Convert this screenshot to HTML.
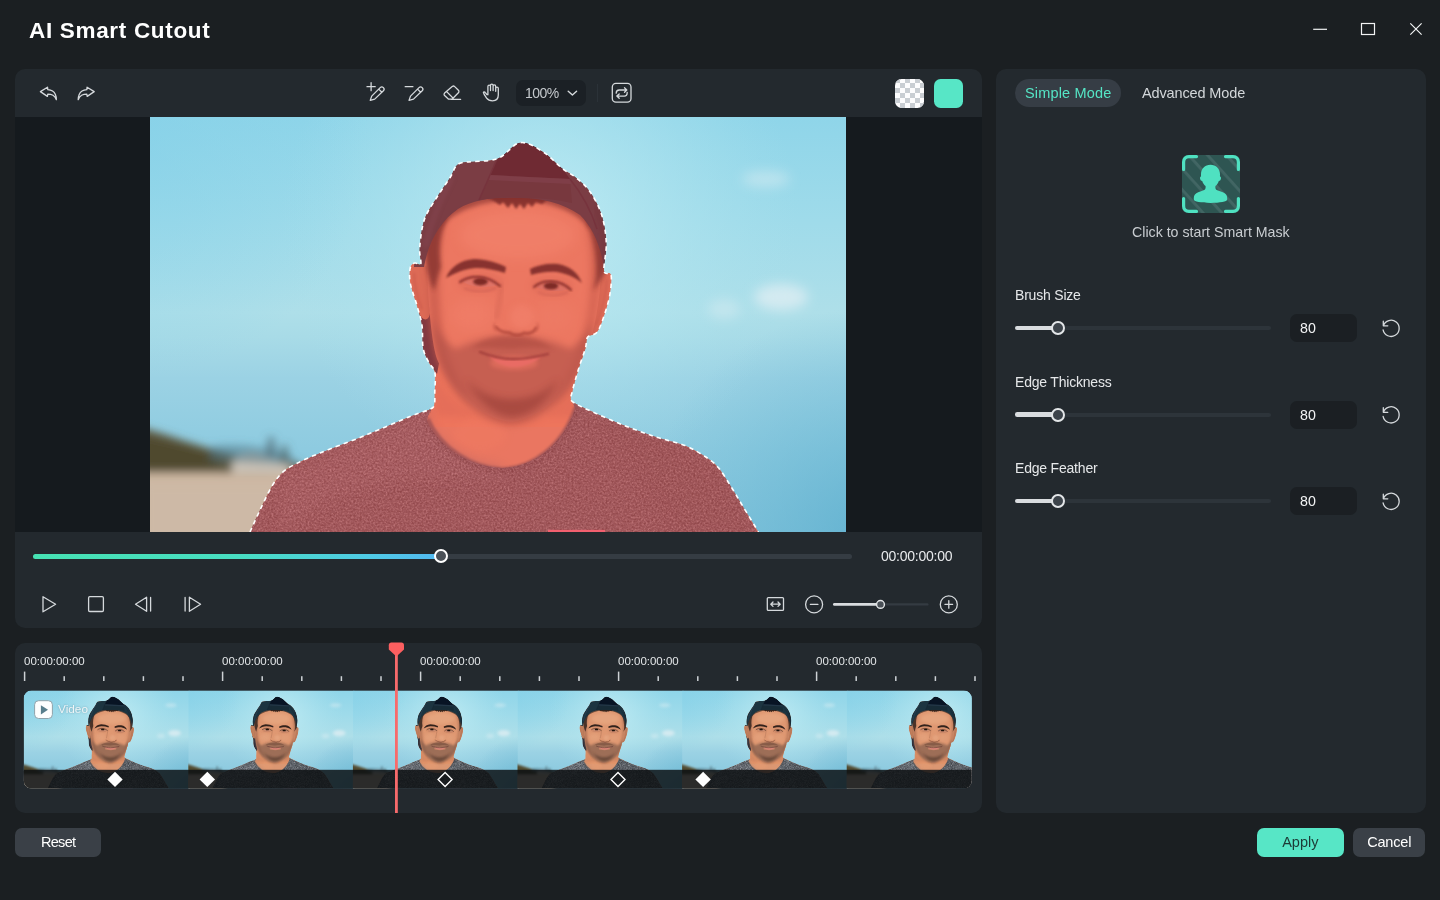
<!DOCTYPE html>
<html>
<head>
<meta charset="utf-8">
<title>AI Smart Cutout</title>
<style>
*{box-sizing:border-box;margin:0;padding:0}
html,body{width:1440px;height:900px;overflow:hidden}
body{background:#1b1f22;font-family:"Liberation Sans",sans-serif;color:#e8eaec;position:relative}
.abs{position:absolute}
.panel{position:absolute;background:#23292e;border-radius:10px}
.t{position:absolute;white-space:nowrap;line-height:1}
.t,.rl,.btn{will-change:transform}
#title{left:28.5px;top:19.5px;font-size:22.5px;font-weight:bold;color:#fff;letter-spacing:0.68px}
svg{position:absolute;overflow:visible}
.ico{fill:none;stroke:#d5d9dc;stroke-width:1.3;stroke-linecap:round;stroke-linejoin:round}
.btn{position:absolute;border-radius:7px;background:#3a4047;color:#fff;font-size:14.5px;text-align:center;height:29px;line-height:29px}
.lbl{font-size:14px;color:#e6e8ea;letter-spacing:-0.2px}
.track{position:absolute;height:4px;border-radius:2px;background:#2c3339}
.fill{position:absolute;height:4px;border-radius:2px;background:#d7dbde}
.knob{position:absolute;width:13px;height:13px;border-radius:50%;background:#3a4047;border:2px solid #e3e6e8}
.vbox{position:absolute;width:67px;height:29px;border-radius:6px;background:#1a1e22;color:#fff;font-size:14px;line-height:29px;padding-left:10px}
.rl{position:absolute;font-size:11.5px;color:#e3e6e8;white-space:nowrap;line-height:1}
</style>
</head>
<body>
<!--PHOTODEFS-->
<svg width="0" height="0" style="position:absolute;left:0;top:0">
<defs>
  <linearGradient id="sky" x1="0" y1="0" x2="0" y2="1">
    <stop offset="0" stop-color="#8fd5e9"/>
    <stop offset="0.25" stop-color="#9fdbea"/>
    <stop offset="0.47" stop-color="#aedfe9"/>
    <stop offset="0.53" stop-color="#a8dbe7"/>
    <stop offset="0.63" stop-color="#9bd2e4"/>
    <stop offset="0.8" stop-color="#8ecbe0"/>
    <stop offset="1" stop-color="#82c3db"/>
  </linearGradient>
  <radialGradient id="skyglow" cx="390" cy="110" r="260" gradientUnits="userSpaceOnUse">
    <stop offset="0" stop-color="#c2edf4" stop-opacity="0.9"/>
    <stop offset="0.5" stop-color="#b4e6f0" stop-opacity="0.5"/>
    <stop offset="1" stop-color="#a8e0ec" stop-opacity="0"/>
  </radialGradient>
  <radialGradient id="skydeep" cx="720" cy="420" r="230" gradientUnits="userSpaceOnUse">
    <stop offset="0" stop-color="#5fb0cf" stop-opacity="0.85"/>
    <stop offset="1" stop-color="#6fbcd6" stop-opacity="0"/>
  </radialGradient>
  <radialGradient id="skyleft" cx="-20" cy="20" r="240" gradientUnits="userSpaceOnUse">
    <stop offset="0" stop-color="#84d0e8" stop-opacity="0.6"/>
    <stop offset="1" stop-color="#84d0e8" stop-opacity="0"/>
  </radialGradient>
  <linearGradient id="skin" x1="0" y1="0" x2="1" y2="0">
    <stop offset="0" stop-color="#d59a78"/>
    <stop offset="0.35" stop-color="#e2a883"/>
    <stop offset="0.7" stop-color="#dda07c"/>
    <stop offset="1" stop-color="#c98e70"/>
  </linearGradient>
  <filter id="b1" x="-20%" y="-20%" width="140%" height="140%"><feGaussianBlur stdDeviation="1"/></filter>
  <filter id="b2" x="-20%" y="-20%" width="140%" height="140%"><feGaussianBlur stdDeviation="2"/></filter>
  <filter id="b3" x="-30%" y="-30%" width="160%" height="160%"><feGaussianBlur stdDeviation="3.5"/></filter>
  <filter id="b5" x="-30%" y="-30%" width="160%" height="160%"><feGaussianBlur stdDeviation="4.5"/></filter>
  <filter id="b6" x="-30%" y="-30%" width="160%" height="160%"><feGaussianBlur stdDeviation="6"/></filter>
  <filter id="grain" x="0" y="0" width="100%" height="100%">
    <feTurbulence type="fractalNoise" baseFrequency="0.55" numOctaves="2" seed="7" result="n"/>
    <feColorMatrix in="n" type="matrix" values="0 0 0 0 1  0 0 0 0 1  0 0 0 0 1  2.6 0 0 0 -1.05"/>
    <feComposite in2="SourceGraphic" operator="in"/>
  </filter>
  <filter id="grainD" x="0" y="0" width="100%" height="100%">
    <feTurbulence type="fractalNoise" baseFrequency="0.5" numOctaves="2" seed="21" result="n"/>
    <feColorMatrix in="n" type="matrix" values="0 0 0 0 0  0 0 0 0 0  0 0 0 0 0  0 2.6 0 0 -1.05"/>
    <feComposite in2="SourceGraphic" operator="in"/>
  </filter>
  <path id="person" d="M100.0 415.0C101.6 411.6 105.8 401.8 109.4 394.3C113.0 386.8 117.7 376.5 121.5 370.0C125.3 363.5 128.4 359.2 132.5 355.4C136.6 351.5 139.5 350.1 145.8 346.9C152.1 343.6 158.8 340.6 170.2 335.9C181.5 331.2 198.9 325.0 213.9 318.9C228.9 312.8 248.4 304.4 260.0 299.5C271.6 294.6 281 293.5 283.6 289.7C285.6 286 284.5 279.5 284.8 273.7C285.1 267.9 285.8 259.7 284.8 255.0C283.8 250.3 280.9 249.6 279.0 245.7C277.1 241.8 274.4 237.9 273.2 231.7C272.0 225.5 273.0 215.3 272.0 208.3C271.0 201.3 269.2 196.7 267.3 189.7C265.4 182.7 261.5 172.8 260.3 166.3C259.1 159.8 259.5 153.9 260.3 150.5C261.1 147.1 263.2 146.6 265.0 146.0C266.8 145.4 270.0 149.6 270.8 147.0C271.6 144.4 269.1 138.1 269.7 130.7C270.3 123.3 271.6 110.9 274.3 102.7C277.0 94.5 281.7 88.7 286.0 81.7C290.3 74.7 296.1 66.6 300.0 60.7C303.9 54.8 303.5 49.6 309.3 46.5C317.1 43.4 336.6 45.5 346.7 42.0C356.8 38.5 362.2 26.9 370.0 25.7C377.8 24.5 386.3 30.7 393.3 35.0C400.3 39.3 406.6 47.0 412.0 51.3C417.4 55.6 421.3 56.8 426.0 60.7C430.7 64.6 435.7 68.5 440.0 74.7C444.3 80.9 449.0 89.5 451.7 98.0C454.4 106.5 455.9 116.7 456.3 126.0C456.7 135.3 453.2 148.7 454.0 154.0C454.8 159.3 460.0 154.0 461.0 158.0C462.0 162.0 461.0 171.2 459.8 178.0C458.6 184.8 456.1 192.8 454.0 199.0C451.9 205.2 449.7 211.8 447.0 215.3C444.3 218.8 439.6 217.3 437.7 220.0C435.8 222.7 436.9 226.2 435.3 231.7C433.7 237.1 430.4 245.7 428.3 252.7C426.2 259.7 423.6 268.5 422.5 273.7C421.4 278.9 419.4 281 421.5 283.8C424.6 287.2 432.8 290.3 441.3 294.3C449.8 298.3 462.1 303.6 472.5 307.8C482.9 312.0 493.4 315.8 503.8 319.3C514.2 322.8 526.3 325.2 535.0 328.6C543.7 332.1 550.2 336.4 555.8 340.0C561.3 343.6 564.1 345.6 568.3 350.5C572.5 355.4 576.6 362.7 580.8 369.3C585.0 375.9 588.7 382.4 593.3 390.0C597.9 397.6 606.0 410.8 608.5 415.0Z"/>
  <path id="personline" d="M100.0 415.0C101.6 411.6 105.8 401.8 109.4 394.3C113.0 386.8 117.7 376.5 121.5 370.0C125.3 363.5 128.4 359.2 132.5 355.4C136.6 351.5 139.5 350.1 145.8 346.9C152.1 343.6 158.8 340.6 170.2 335.9C181.5 331.2 198.9 325.0 213.9 318.9C228.9 312.8 248.4 304.4 260.0 299.5C271.6 294.6 281 293.5 283.6 289.7C285.6 286 284.5 279.5 284.8 273.7C285.1 267.9 285.8 259.7 284.8 255.0C283.8 250.3 280.9 249.6 279.0 245.7C277.1 241.8 274.4 237.9 273.2 231.7C272.0 225.5 273.0 215.3 272.0 208.3C271.0 201.3 269.2 196.7 267.3 189.7C265.4 182.7 261.5 172.8 260.3 166.3C259.1 159.8 259.5 153.9 260.3 150.5C261.1 147.1 263.2 146.6 265.0 146.0C266.8 145.4 270.0 149.6 270.8 147.0C271.6 144.4 269.1 138.1 269.7 130.7C270.3 123.3 271.6 110.9 274.3 102.7C277.0 94.5 281.7 88.7 286.0 81.7C290.3 74.7 296.1 66.6 300.0 60.7C303.9 54.8 303.5 49.6 309.3 46.5C317.1 43.4 336.6 45.5 346.7 42.0C356.8 38.5 362.2 26.9 370.0 25.7C377.8 24.5 386.3 30.7 393.3 35.0C400.3 39.3 406.6 47.0 412.0 51.3C417.4 55.6 421.3 56.8 426.0 60.7C430.7 64.6 435.7 68.5 440.0 74.7C444.3 80.9 449.0 89.5 451.7 98.0C454.4 106.5 455.9 116.7 456.3 126.0C456.7 135.3 453.2 148.7 454.0 154.0C454.8 159.3 460.0 154.0 461.0 158.0C462.0 162.0 461.0 171.2 459.8 178.0C458.6 184.8 456.1 192.8 454.0 199.0C451.9 205.2 449.7 211.8 447.0 215.3C444.3 218.8 439.6 217.3 437.7 220.0C435.8 222.7 436.9 226.2 435.3 231.7C433.7 237.1 430.4 245.7 428.3 252.7C426.2 259.7 423.6 268.5 422.5 273.7C421.4 278.9 419.4 281 421.5 283.8C424.6 287.2 432.8 290.3 441.3 294.3C449.8 298.3 462.1 303.6 472.5 307.8C482.9 312.0 493.4 315.8 503.8 319.3C514.2 322.8 526.3 325.2 535.0 328.6C543.7 332.1 550.2 336.4 555.8 340.0C561.3 343.6 564.1 345.6 568.3 350.5C572.5 355.4 576.6 362.7 580.8 369.3C585.0 375.9 588.7 382.4 593.3 390.0C597.9 397.6 606.0 410.8 608.5 415.0"/>
  <clipPath id="personclip"><use href="#person"/></clipPath>
  <clipPath id="frame"><rect width="696" height="415"/></clipPath>

  <symbol id="photo" viewBox="0 0 696 415" preserveAspectRatio="none">
    <g clip-path="url(#frame)">
      <!-- sky -->
      <rect width="696" height="415" fill="url(#sky)"/>
      <rect width="696" height="415" fill="url(#skyglow)"/>
      <rect width="696" height="415" fill="url(#skydeep)"/>
      <rect width="696" height="415" fill="url(#skyleft)"/>
      <!-- clouds -->
      <g filter="url(#b6)" fill="#ecf2f6">
        <ellipse cx="616" cy="62" rx="24" ry="8" opacity="0.4"/>
        <ellipse cx="631" cy="180" rx="27" ry="13" opacity="0.62"/>
        <ellipse cx="574" cy="192" rx="16" ry="10" opacity="0.32"/>
      </g>
      <!-- beach -->
      <g filter="url(#b5)">
        <path d="M-10 352L60 352L150 352L160 425L-10 425Z" fill="#cdb8a3"/>
        <path d="M-10 310C20 318 50 330 80 337C100 341 125 343 150 346L150 356C110 357 60 356 -10 356Z" fill="#5e5a42"/>
        <path d="M-10 318C10 322 40 330 70 338L70 352L-10 352Z" fill="#4f492f"/>
        <path d="M82 344C90 336 104 334 112 338C120 342 130 346 140 348L140 356L82 356Z" fill="#cbc3b8"/>
        <path d="M60 330C80 326 110 328 140 338L146 348L60 344Z" fill="#4f7483" opacity="0.55"/>
        <path d="M118 320L124 320L126 340L116 340Z" fill="#4f6770" opacity="0.7"/>
        <path d="M132 328L137 328L139 346L130 346Z" fill="#4c5f60" opacity="0.7"/>
      </g>
      <rect x="-5" y="368" width="150" height="60" fill="#cdb9a6" filter="url(#b3)"/>
      <!-- person -->
      <g clip-path="url(#personclip)">
        <!-- skin base (head+neck) -->
        <use href="#person" fill="#db9772"/>
        <!-- neck -->
        <path d="M280 240L440 236L446 310L272 310Z" fill="#e2946a"/>
        <path d="M284 250C292 280 322 306 362 309C398 306 424 282 432 246C438 270 436 290 430 300L290 300C282 288 282 268 284 250Z" fill="#c47f5e" opacity="0.5" filter="url(#b3)"/>
        <ellipse cx="330" cy="318" rx="26" ry="16" fill="#e59b72" opacity="0.55" filter="url(#b3)"/>
        <!-- shirt -->
        <path d="M95 420L109 394L121.5 370L132.5 355L146 347L170 336L214 319L260 299.5L283.5 289.5C279 296 277.5 300 277 304C290 332 322 350 352 351C384 350 412 328 425 292C424 288 423 286 421.5 284L441 294L472.5 308L504 319L535 328.6L556 340L568 350.5L581 369L593 390L610 420Z" fill="#5d6269"/>
        <!-- shirt soft shading -->
        <path d="M130 360L283 292L277 304C290 332 322 350 352 351L352 365C300 360 200 350 130 420Z" fill="#6d727a" opacity="0.6" filter="url(#b6)"/>
        <path d="M440 296L560 344L610 420L520 420C500 370 470 330 440 296Z" fill="#565b62" opacity="0.5" filter="url(#b6)"/>
        <!-- collar rib -->
        <path d="M277 302C290 332 322 352 352 353C384 352 414 328 426.5 290" fill="none" stroke="#50555c" stroke-width="5.5" opacity="0.75" filter="url(#b1)"/>
        <!-- shirt grain -->
        <path d="M95 420L109 394L121.5 370L132.5 355L146 347L170 336L214 319L260 299.5L283 290L277 304C290 332 322 350 352 351C384 350 412 328 425 292L441 294L472.5 308L504 319L535 328.6L556 340L568 350.5L581 369L593 390L610 420Z" fill="#fff" filter="url(#grain)" opacity="0.28"/>
        <path d="M95 420L109 394L121.5 370L132.5 355L146 347L170 336L214 319L260 299.5L283 290L277 304C290 332 322 350 352 351C384 350 412 328 425 292L441 294L472.5 308L504 319L535 328.6L556 340L568 350.5L581 369L593 390L610 420Z" fill="#000" filter="url(#grainD)" opacity="0.3"/>
        <!-- shirt logo strip -->
        <rect x="398" y="412.9" width="57" height="4" fill="#e8708a"/>

        <!-- back of cap behind ear/neck (left) -->
        <path d="M266 192C269 208 270 222 273 232C275 240 280 247 287 257L291 236C285 222 282 206 280 190Z" fill="#2a2f3c"/>
        <!-- ears -->
        <path d="M271 147C264 143 259 148 260 160C261 172 265 186 269 196C272 204 279 205 280 196L278 150Z" fill="#c4825f"/>
        <path d="M264 156C264 168 268 182 272 192" stroke="#a8694f" stroke-width="2.5" fill="none" opacity="0.6" filter="url(#b1)"/>
        <path d="M453 154C459 152 462 157 461 166C460 180 456 196 450 210C446 218 438 221 436 216L445 160Z" fill="#c58260"/>
        <path d="M457 162C456 178 452 194 446 208" stroke="#a8694f" stroke-width="2.5" fill="none" opacity="0.5" filter="url(#b1)"/>
        <!-- face -->
        <path d="M277 150C275 120 286 96 310 86C340 78 400 78 425 90C445 102 452 130 451 156C450 185 444 215 437 236C427 266 398 298 362 305C330 302 300 274 287 242C281 224 278 180 277 150Z" fill="#df9872"/>
        <!-- highlights -->
        <ellipse cx="368" cy="118" rx="58" ry="24" fill="#e9ab84" opacity="0.65" filter="url(#b6)"/>
        <ellipse cx="322" cy="198" rx="22" ry="16" fill="#e6a580" opacity="0.6" filter="url(#b6)"/>
        <ellipse cx="404" cy="200" rx="20" ry="15" fill="#e3a27d" opacity="0.5" filter="url(#b6)"/>
        <!-- side shading -->
        <path d="M277 150C275 120 282 100 298 90C289 120 287 170 292 212C296 240 306 262 322 284C302 270 291 252 287 242C281 224 278 180 277 150Z" fill="#9a6048" opacity="0.7" filter="url(#b3)"/>
        <path d="M451 150C452 125 446 104 432 94C441 120 443 160 437 200C432 230 420 258 402 284C424 266 432 248 437 236C444 215 450 185 451 150Z" fill="#a2664b" opacity="0.6" filter="url(#b3)"/>
        <!-- beard stubble -->
        <path d="M281 200C284 232 292 258 306 276C322 296 344 307 362 307C384 305 408 290 422 270C434 252 441 230 443 204C438 216 430 226 420 232C408 226 392 221 378 220C372 216 352 216 346 220C332 221 318 226 306 232C296 226 287 214 281 200Z" fill="#7c5948" opacity="0.66" filter="url(#b3)"/>
        <path d="M316 262C328 286 348 300 362 300C380 299 398 286 408 262C396 276 380 282 362 282C344 282 328 276 316 262Z" fill="#5c3f33" opacity="0.75" filter="url(#b3)"/>
        <path d="M322 231C332 222 346 218 360 220C376 218 392 222 404 233C394 230 380 230 362 232C346 231 334 230 322 231Z" fill="#6e4839" opacity="0.5" filter="url(#b2)"/>
        <!-- skin around lips -->
        <ellipse cx="364" cy="246" rx="24" ry="7" fill="#d18a6d" opacity="0.75" filter="url(#b2)"/>
        <!-- lips / mouth -->
        <path d="M338 238C346 247 356 250 364 250C374 250 384 246 392 239C380 242 372 243 363 243C353 243 346 241 338 238Z" fill="#d98478" filter="url(#b1)"/>
        <path d="M330 235C340 239 352 242 363 242C374 242 386 240 398 237" stroke="#5e3630" stroke-width="2.3" fill="none" stroke-linecap="round" filter="url(#b1)"/>
        <!-- nose -->
        <ellipse cx="372" cy="200" rx="12" ry="12" fill="#e8a984" opacity="0.7" filter="url(#b3)"/>
        <path d="M352 166C350 180 349 190 346 202" stroke="#b3775a" stroke-width="4" fill="none" opacity="0.55" filter="url(#b2)"/>
        <path d="M346 210C350 216 356 215 360 216C364 219 370 219 374 216C378 217 384 216 386 211" stroke="#7a4633" stroke-width="3" fill="none" stroke-linecap="round" opacity="0.8" filter="url(#b1)"/>
        <path d="M345 206C343 210 344 213 347 214M387 206C389 210 388 213 385 214" stroke="#a86b50" stroke-width="2" fill="none" opacity="0.6" filter="url(#b1)"/>
        <!-- eyes -->
        <ellipse cx="330" cy="165" rx="22" ry="9" fill="#b9755a" opacity="0.45" filter="url(#b3)"/>
        <ellipse cx="402" cy="169" rx="21" ry="9" fill="#b9755a" opacity="0.45" filter="url(#b3)"/>
        <path d="M313 165C320 160 335 159 348 168C338 171 323 171 313 165Z" fill="#c9917a"/>
        <ellipse cx="330.5" cy="164.6" rx="7.4" ry="3.8" fill="#231510" filter="url(#b1)"/>
        <path d="M310 165C320 158 336 157 350 169" stroke="#3c241c" stroke-width="2.2" fill="none" stroke-linecap="round" filter="url(#b1)"/>
        <path d="M314 171C324 176 338 175 346 171" stroke="#b57860" stroke-width="2" fill="none" opacity="0.7" filter="url(#b1)"/>
        <path d="M386 170C394 164 409 164 419 172C410 175 396 175 386 170Z" fill="#c48c75"/>
        <ellipse cx="401" cy="168.9" rx="7.2" ry="3.6" fill="#231510" filter="url(#b1)"/>
        <path d="M384 170C393 162 410 162 421 173" stroke="#3c241c" stroke-width="2.2" fill="none" stroke-linecap="round" filter="url(#b1)"/>
        <path d="M388 175C397 180 410 179 418 175" stroke="#b57860" stroke-width="2" fill="none" opacity="0.7" filter="url(#b1)"/>
        <!-- eyebrows -->
        <path d="M296 161C300 150 311 143 324 142C336 142 348 146 356 150L355 156C346 153 336 151 326 151C314 152 305 156 296 161Z" fill="#33221b" filter="url(#b1)"/>
        <path d="M380 152C388 148 398 146 408 147C420 149 428 156 432 166C425 160 417 157 407 155C398 154 388 156 381 158Z" fill="#33221b" filter="url(#b1)"/>
        <!-- hair under cap / sideburns -->
        <path d="M290 112C302 94 332 84 364 83C400 84 426 94 440 112L446 100L420 78L330 74L290 94Z" fill="#4a342a" opacity="0.75" filter="url(#b2)"/>
        <path d="M336 80L344 84L350 88L353 85L358 91L362 86L366 92L370 87L374 92L378 86L382 90L386 85L392 87L398 82L392 77L350 76Z" fill="#2a1d18" opacity="0.92" filter="url(#b1)"/>
        <path d="M271 118C274 130 276 140 277 152C279 160 281 168 284 174C286 166 288 158 291 150C288 132 290 116 298 98L282 96Z" fill="#3b2a24" opacity="0.88" filter="url(#b2)"/>
        <path d="M437 106C444 122 446 138 446 154C446 162 445 168 443 174C448 168 452 160 456 154L457 120L448 96Z" fill="#3b2a24" opacity="0.85" filter="url(#b2)"/>
        <!-- cap -->
        <path d="M264 150C265 130 270 110 274 102C278 94 282 88 286 81C290 74 296 66 300 60C304 54 303 49 309 46C317 43 336 45 347 42C357 38 362 27 370 25.5C378 24.5 386 30 393 35C400 39 406 47 412 51C417 55 421 57 426 60C431 64 436 68 440 74C444 80 449 89 452 98C455 106 456 116 457 126C457 135 455 146 455 158C452 132 444 112 430 98C412 86 392 81 370 81C345 80 324 82 308 92C290 104 278 126 274 150Z" fill="#1c3440"/>
        <!-- cap band (front strap) -->
        <path d="M340 58L420 62L422 86C405 82 390 81 370 81C355 80 342 81 329 83Z" fill="#172b36"/>
        <!-- cap top dark panel -->
        <path d="M347 42C357 38 362 27 370 25.5C378 24.5 386 30 393 35C400 39 406 47 412 51L420 62L340 58Z" fill="#081424"/>
        <path d="M340 58L420 62L421 67L339 63Z" fill="#2a3c4e" opacity="0.7"/>
        <!-- cap seams / shading -->
        <path d="M347 42L329 83" stroke="#152434" stroke-width="1.5" fill="none"/>
        <path d="M420 62C428 72 440 90 447 112" stroke="#152434" stroke-width="1.5" fill="none"/>
        <path d="M302 60C292 80 282 100 275 130" stroke="#34495e" stroke-width="4" fill="none" opacity="0.5" filter="url(#b2)"/>
        <path d="M446 90C452 108 455 130 455 150" stroke="#16232f" stroke-width="5" fill="none" opacity="0.5" filter="url(#b2)"/>
      </g>
    </g>
  </symbol>
</defs>
</svg>
<!--/PHOTODEFS-->
<!-- TITLE BAR -->
<div id="title" class="t">AI Smart Cutout</div>
<svg id="winctl" style="left:1300px;top:15px" width="140" height="30" viewBox="1300 15 140 30">
  <g fill="none" stroke="#f2f3f4" stroke-width="1.2">
    <path d="M1313.2 29.3H1327"/>
    <rect x="1361.5" y="23.5" width="13" height="11"/>
    <path d="M1410.3 23.4L1421.6 34.7M1421.6 23.4L1410.3 34.7"/>
  </g>
</svg>

<!-- LEFT TOP PANEL -->
<div class="panel" id="pv" style="left:15px;top:69px;width:967px;height:559px;overflow:hidden">
  <div class="abs" id="stage" style="left:0;top:48px;width:967px;height:415px;background:#151a1e">
    <svg style="left:135px;top:0" width="696" height="415" viewBox="0 0 696 415">
      <use href="#photo" width="696" height="415"/>
      <use href="#person" fill="#ff4a4a" fill-opacity="0.42" clip-path="url(#frame)"/>
      <use href="#personline" fill="none" stroke="#fff" stroke-width="1.6" stroke-dasharray="4.4 4.1" clip-path="url(#frame)"/>
    </svg>
  </div>
</div>

<!--UI1-->
<!-- TOOLBAR + TRANSPORT (page coords overlay) -->
<div class="abs" style="left:515.5px;top:79.5px;width:70px;height:26.5px;border-radius:7px;background:#1b2025"></div>
<div class="t" id="zoomtxt" style="left:525.3px;top:86px;font-size:14px;letter-spacing:-0.5px;color:#c5c9cd">100%</div>
<div class="abs" style="left:597px;top:84px;width:1px;height:18px;background:#2b3238"></div>
<!-- swatches -->
<div class="abs" style="left:895px;top:78.5px;width:29px;height:29px;border-radius:6.5px;overflow:hidden;background:#fdfdfe">
  <svg width="30" height="30" style="left:0;top:-0.25px"><defs><pattern id="chk" width="10" height="10" patternUnits="userSpaceOnUse"><rect width="5" height="5" fill="#c9ced3"/><rect x="5" y="5" width="5" height="5" fill="#c9ced3"/></pattern></defs><rect width="30" height="30" fill="url(#chk)"/></svg>
</div>
<div class="abs" style="left:934px;top:78.5px;width:28.5px;height:29px;border-radius:6.5px;background:#57e6c6"></div>

<!-- progress slider -->
<div class="abs" style="left:33px;top:554px;width:819px;height:4.5px;border-radius:2.5px;background:#353c43"></div>
<div class="abs" style="left:33px;top:554px;width:408px;height:4.5px;border-radius:2.5px;background:linear-gradient(90deg,#46e2b3 0%,#48dec2 50%,#4fcbe6 82%,#52b8f0 100%)"></div>
<div class="abs" style="left:434.3px;top:549.3px;width:14px;height:14px;border-radius:50%;background:#4a5057;border:2px solid #fff"></div>
<div class="t" id="tc" style="left:880.8px;top:549.3px;font-size:14px;letter-spacing:-0.24px;color:#e8eaec">00:00:00:00</div>

<svg id="icons1" style="left:0;top:0;pointer-events:none" width="1440" height="900" viewBox="0 0 1440 900">
  <g class="ico">
    <!-- undo / redo -->
    <path id="undo" d="M40.4 91.6L47.5 87.2L47.8 89.6C51.5 89.8 54.2 91.6 55.4 94.4C56.1 96 56.4 97.8 56.4 99.7C55.7 97.6 54.6 96.2 53 95.2C51.5 94.4 49.8 94.1 47.8 94.1L47.4 96.4Z"/>
    <use href="#undo" transform="translate(134.6 0) scale(-1 1)"/>
    <!-- pencil plus -->
    <path d="M367 86.7H375.2M371.1 82.7V90.7"/>
    <path id="pencil" d="M370.2 100.4L371.7 96.1L380.2 87.6Q381.8 86 383.4 87.6Q385 89.2 383.4 90.8L374.7 99.1ZM378.7 89.1L381.9 92.3"/>
    <!-- pencil minus -->
    <path d="M405.2 86.7H412.9"/>
    <use href="#pencil" transform="translate(38.8 0)"/>
    <!-- eraser -->
    <path d="M452.2 86.6C452.9 85.9 454 85.9 454.7 86.6L458.4 90.3C459.1 91 459.1 92.1 458.4 92.8L452 99.2H448.6L444.6 95.6C443.9 94.9 443.9 93.8 444.6 93.1ZM446.4 91.4L453.2 98.2M451.2 99.4H460.6"/>
    <!-- hand -->
    <path d="M486.9 94.6L485.4 92.6C484.7 91.6 483.4 91.5 483.4 92.4C483.6 93.6 485 96 486.6 98.2C488 100.1 490 100.8 492.6 100.8C496.2 100.8 498.3 98.6 498.3 95V88.6C498.3 87.6 497.7 87.1 497 87.1C496.3 87.1 495.7 87.6 495.7 88.6V91.3M495.7 90.6V86.4C495.7 85.4 495.1 84.9 494.4 84.9C493.7 84.9 493.1 85.4 493.1 86.4V90.6M493.1 90.4V85.6C493.1 84.6 492.5 84.1 491.8 84.1C491.1 84.1 490.5 84.6 490.5 85.6V90.4M490.5 90.6V86.6C490.5 85.6 489.9 85.1 489.2 85.1C488.5 85.1 487.9 85.6 487.9 86.6V94.8"/>
    <!-- chevron -->
    <path d="M568.2 91.2L572.4 95.1L576.6 91.2" stroke-width="1.4"/>
    <!-- swap -->
    <rect x="612.3" y="83.4" width="18.7" height="18.7" rx="3.6"/>
    <path d="M616.2 93.2C616.2 91.2 617.4 90 619.2 90H626.6M624.5 87.8L626.8 90L624.5 92.2M627.2 92.4C627.2 94.6 626 96.1 624.2 96.1H616.9M619.2 93.9L616.8 96.1L619.2 98.3"/>
    <!-- transport -->
    <path d="M43 596.7L55.6 604.2L43 611.8Z"/>
    <rect x="88.6" y="596.7" width="14.8" height="14.8" rx="1.2"/>
    <path d="M146.6 597.2L135.5 604.2L146.6 611.3ZM150.6 597.4V611.1"/>
    <path d="M189.4 597.2L200.6 604.2L189.4 611.3ZM185.1 597.4V611.1"/>
    <!-- fit -->
    <rect x="767.3" y="597.6" width="16.2" height="12.8" rx="1"/>
    <path d="M770.8 604.2H780.2M773 602L770.8 604.2L773 606.4M778 602L780.2 604.2L778 606.4"/>
    <!-- minus / plus circles -->
    <circle cx="814.1" cy="604.4" r="8.5"/>
    <path d="M810.4 604.4H817.9"/>
    <circle cx="948.8" cy="604.4" r="8.5"/>
    <path d="M945 604.4H952.6M948.8 600.6V608.2"/>
  </g>
  <!-- zoom slider -->
  <rect x="833" y="603.2" width="95.5" height="2.4" rx="1.2" fill="#343b42"/>
  <rect x="833" y="603" width="47" height="2.8" rx="1.4" fill="#d9dcdf"/>
  <circle cx="880.5" cy="604.4" r="3.9" fill="#4a5057" stroke="#e3e6e8" stroke-width="1.4"/>
</svg>
<!--/UI1-->
<!-- TIMELINE PANEL -->
<div class="panel" id="tl" style="left:15px;top:643px;width:967px;height:170px"></div>

<!--TL-->
<!-- timeline contents -->
<div class="rl" style="left:24px;top:655.5px">00:00:00:00</div>
<div class="rl" style="left:222px;top:655.5px">00:00:00:00</div>
<div class="rl" style="left:420px;top:655.5px">00:00:00:00</div>
<div class="rl" style="left:618px;top:655.5px">00:00:00:00</div>
<div class="rl" style="left:816px;top:655.5px">00:00:00:00</div>
<svg id="tlsvg" style="left:0;top:0;pointer-events:none" width="1440" height="900" viewBox="0 0 1440 900">
  <g fill="#cdd1d5"><rect x="23.85" y="671.6" width="1.5" height="9.4"/><rect x="63.45" y="676.2" width="1.5" height="4.8"/><rect x="103.05" y="676.2" width="1.5" height="4.8"/><rect x="142.65" y="676.2" width="1.5" height="4.8"/><rect x="182.25" y="676.2" width="1.5" height="4.8"/><rect x="221.85" y="671.6" width="1.5" height="9.4"/><rect x="261.45" y="676.2" width="1.5" height="4.8"/><rect x="301.05" y="676.2" width="1.5" height="4.8"/><rect x="340.65" y="676.2" width="1.5" height="4.8"/><rect x="380.25" y="676.2" width="1.5" height="4.8"/><rect x="419.85" y="671.6" width="1.5" height="9.4"/><rect x="459.45" y="676.2" width="1.5" height="4.8"/><rect x="499.05" y="676.2" width="1.5" height="4.8"/><rect x="538.65" y="676.2" width="1.5" height="4.8"/><rect x="578.25" y="676.2" width="1.5" height="4.8"/><rect x="617.85" y="671.6" width="1.5" height="9.4"/><rect x="657.45" y="676.2" width="1.5" height="4.8"/><rect x="697.05" y="676.2" width="1.5" height="4.8"/><rect x="736.65" y="676.2" width="1.5" height="4.8"/><rect x="776.25" y="676.2" width="1.5" height="4.8"/><rect x="815.85" y="671.6" width="1.5" height="9.4"/><rect x="855.45" y="676.2" width="1.5" height="4.8"/><rect x="895.05" y="676.2" width="1.5" height="4.8"/><rect x="934.65" y="676.2" width="1.5" height="4.8"/><rect x="974.25" y="676.2" width="1.5" height="4.8"/></g>
  <defs><clipPath id="stripclip"><rect x="0" y="0" width="948" height="98" rx="8"/></clipPath></defs>
  <g transform="translate(23.7 690.6)" clip-path="url(#stripclip)">
    <rect width="948" height="80" fill="#9ad8e9"/><rect y="79" width="948" height="19" fill="#20262b"/>
    <use href="#photo" x="0.0" y="0" width="166.4" height="98"/><use href="#photo" x="164.6" y="0" width="166.4" height="98"/><use href="#photo" x="329.2" y="0" width="166.4" height="98"/><use href="#photo" x="493.8" y="0" width="166.4" height="98"/><use href="#photo" x="658.4" y="0" width="166.4" height="98"/><use href="#photo" x="823.0" y="0" width="166.4" height="98"/>
    <rect x="0" y="79.2" width="948" height="19" fill="#0c0f12" fill-opacity="0.84"/>
  </g>
  <!-- video badge -->
  <rect x="34.6" y="700.7" width="17.8" height="17.8" rx="4" fill="#fdfefe" stroke="#8fa3ab" stroke-width="1"/>
  <path d="M40.9 705.2V714.4L48 709.8Z" fill="#587e8c"/>
  <path d="M115 771.6999999999999L122.7 779.4L115 787.1L107.3 779.4Z" fill="#fff"/><path d="M207.3 771.6999999999999L215.0 779.4L207.3 787.1L199.60000000000002 779.4Z" fill="#fff"/><path d="M445.1 772.4L452.1 779.4L445.1 786.4L438.1 779.4Z" fill="none" stroke="#fff" stroke-width="1.4"/><path d="M618 772.4L625.0 779.4L618 786.4L611.0 779.4Z" fill="none" stroke="#fff" stroke-width="1.4"/><path d="M703.1 771.6999999999999L710.8000000000001 779.4L703.1 787.1L695.4 779.4Z" fill="#fff"/>
  <!-- playhead -->
  <rect x="395" y="650" width="2.8" height="163" fill="#f76a6b"/>
  <path d="M388.8 645.2C388.8 643.6 389.8 642.6 391.4 642.6H401.4C403 642.6 404 643.6 404 645.2V649.6L396.4 656.4L388.8 649.6Z" fill="#fc5f60"/>
</svg>
<div class="t" id="vidlbl" style="left:58px;top:703.6px;font-size:11.8px;color:rgba(255,255,255,0.86);text-shadow:0 0 2px rgba(60,90,110,0.5)">Video</div>
<!--/TL-->
<!-- RIGHT PANEL -->
<div class="panel" id="rp" style="left:996px;top:69px;width:430px;height:744px"></div>

<!--RP-->
<!-- right panel contents -->
<div class="abs" style="left:1015px;top:79px;width:106px;height:28px;border-radius:14px;background:#363d45"></div>
<div class="t" id="tab1" style="left:1025px;top:85.5px;font-size:14.5px;letter-spacing:0.16px;color:#55e5c5">Simple Mode</div>
<div class="t" id="tab2" style="left:1141.5px;top:85.5px;font-size:14.5px;letter-spacing:-0.13px;color:#d3d7da">Advanced Mode</div>
<div class="t" id="cap" style="left:1132px;top:225px;font-size:14.2px;color:#c9cdd1">Click to start Smart Mask</div>
<div class="t lbl" id="lbl0" style="left:1015px;top:288.0px">Brush Size</div>
<div class="abs" style="left:1015px;top:326.2px;width:256px;height:4px;border-radius:2px;background:#2d343a"></div>
<div class="abs" style="left:1015px;top:325.9px;width:40px;height:4.5px;border-radius:2.25px;background:#d9dcdf"></div>
<div class="abs" style="left:1051.2px;top:321.3px;width:13.8px;height:13.8px;border-radius:50%;background:#3c434a;border:2px solid #e3e6e8"></div>
<div class="abs" style="left:1290px;top:314.0px;width:67px;height:28.4px;border-radius:7px;background:#1b1f23"></div>
<div class="t" style="left:1300px;top:321.4px;font-size:14.2px;color:#f2f3f4">80</div>
<div class="t lbl" id="lbl1" style="left:1015px;top:374.5px">Edge Thickness</div>
<div class="abs" style="left:1015px;top:412.7px;width:256px;height:4px;border-radius:2px;background:#2d343a"></div>
<div class="abs" style="left:1015px;top:412.4px;width:40px;height:4.5px;border-radius:2.25px;background:#d9dcdf"></div>
<div class="abs" style="left:1051.2px;top:407.8px;width:13.8px;height:13.8px;border-radius:50%;background:#3c434a;border:2px solid #e3e6e8"></div>
<div class="abs" style="left:1290px;top:400.5px;width:67px;height:28.4px;border-radius:7px;background:#1b1f23"></div>
<div class="t" style="left:1300px;top:407.9px;font-size:14.2px;color:#f2f3f4">80</div>
<div class="t lbl" id="lbl2" style="left:1015px;top:461.0px">Edge Feather</div>
<div class="abs" style="left:1015px;top:499.2px;width:256px;height:4px;border-radius:2px;background:#2d343a"></div>
<div class="abs" style="left:1015px;top:498.9px;width:40px;height:4.5px;border-radius:2.25px;background:#d9dcdf"></div>
<div class="abs" style="left:1051.2px;top:494.3px;width:13.8px;height:13.8px;border-radius:50%;background:#3c434a;border:2px solid #e3e6e8"></div>
<div class="abs" style="left:1290px;top:487.0px;width:67px;height:28.4px;border-radius:7px;background:#1b1f23"></div>
<div class="t" style="left:1300px;top:494.4px;font-size:14.2px;color:#f2f3f4">80</div>
<svg id="icons2" style="left:0;top:0;pointer-events:none" width="1440" height="900" viewBox="0 0 1440 900">
  <defs>
    <pattern id="stripes" width="14" height="14" patternUnits="userSpaceOnUse" patternTransform="rotate(48) translate(0 3)">
      <rect width="14" height="14" fill="#2e5552"/><rect x="0" y="0" width="14" height="2.8" fill="#426664"/>
    </pattern>
    <clipPath id="mclip"><rect x="1182" y="155" width="58" height="58" rx="6"/></clipPath>
  </defs>
  <rect x="1182" y="155" width="58" height="58" rx="6" fill="url(#stripes)"/>
  <g fill="none" stroke="#4fe1c1" stroke-width="3.2" stroke-linecap="round">
    <path d="M1183.6 169.5V162C1183.6 158.8 1185.8 156.6 1189 156.6H1196.5"/>
    <path d="M1225.5 156.6H1233C1236.2 156.6 1238.4 158.8 1238.4 162V169.5"/>
    <path d="M1183.6 198.5V206C1183.6 209.2 1185.8 211.4 1189 211.4H1196.5"/>
    <path d="M1225.5 211.4H1233C1236.2 211.4 1238.4 209.2 1238.4 206V198.5"/>
  </g>
  <path d="M1210.5 164.8C1216 164.8 1220 168.8 1220 174.2C1220 175 1220 175.6 1219.9 176.2C1220.8 176.6 1221.2 177.6 1220.9 178.8C1220.6 180.2 1219.8 181 1218.8 181C1218 183.4 1216.8 185 1215.4 186V187.6C1215.4 189.2 1216.2 190 1218 190.6L1222.8 192.2C1225.6 193.2 1227.2 195.2 1227.2 198V199.6C1227.2 201.6 1220 203 1210.5 203C1201 203 1193.8 201.6 1193.8 199.6V198C1193.8 195.2 1195.4 193.2 1198.2 192.2L1203 190.6C1204.8 190 1205.6 189.2 1205.6 187.6V186C1204.2 185 1203 183.4 1202.2 181C1201.2 181 1200.4 180.2 1200.1 178.8C1199.8 177.6 1200.2 176.6 1201.1 176.2C1201 175.6 1201 175 1201 174.2C1201 168.8 1205 164.8 1210.5 164.8Z" fill="#4fe1c1"/>
  <g class="ico" stroke="#dfe2e5" stroke-width="1.3">
    <path d="M1383.1 329.9A8.1 8.1 0 1 0 1383.4 325.7M1383.3 321.2V325.8H1387.8"/>
    <path d="M1383.1 416.4A8.1 8.1 0 1 0 1383.4 412.2M1383.3 407.7V412.3H1387.8"/>
    <path d="M1383.1 502.9A8.1 8.1 0 1 0 1383.4 498.7M1383.3 494.2V498.8H1387.8"/>
  </g>
</svg>
<!--/RP-->
<!-- BOTTOM BUTTONS -->
<div class="btn" style="left:14.5px;top:828px;width:86.3px;letter-spacing:-0.7px">Reset</div>
<div class="btn" style="left:1257px;top:828px;width:86.7px;background:#57e6c6;color:#1d3a36">Apply</div>
<div class="btn" style="left:1353.3px;top:828px;width:72.4px;letter-spacing:-0.2px">Cancel</div>
</body>
</html>
